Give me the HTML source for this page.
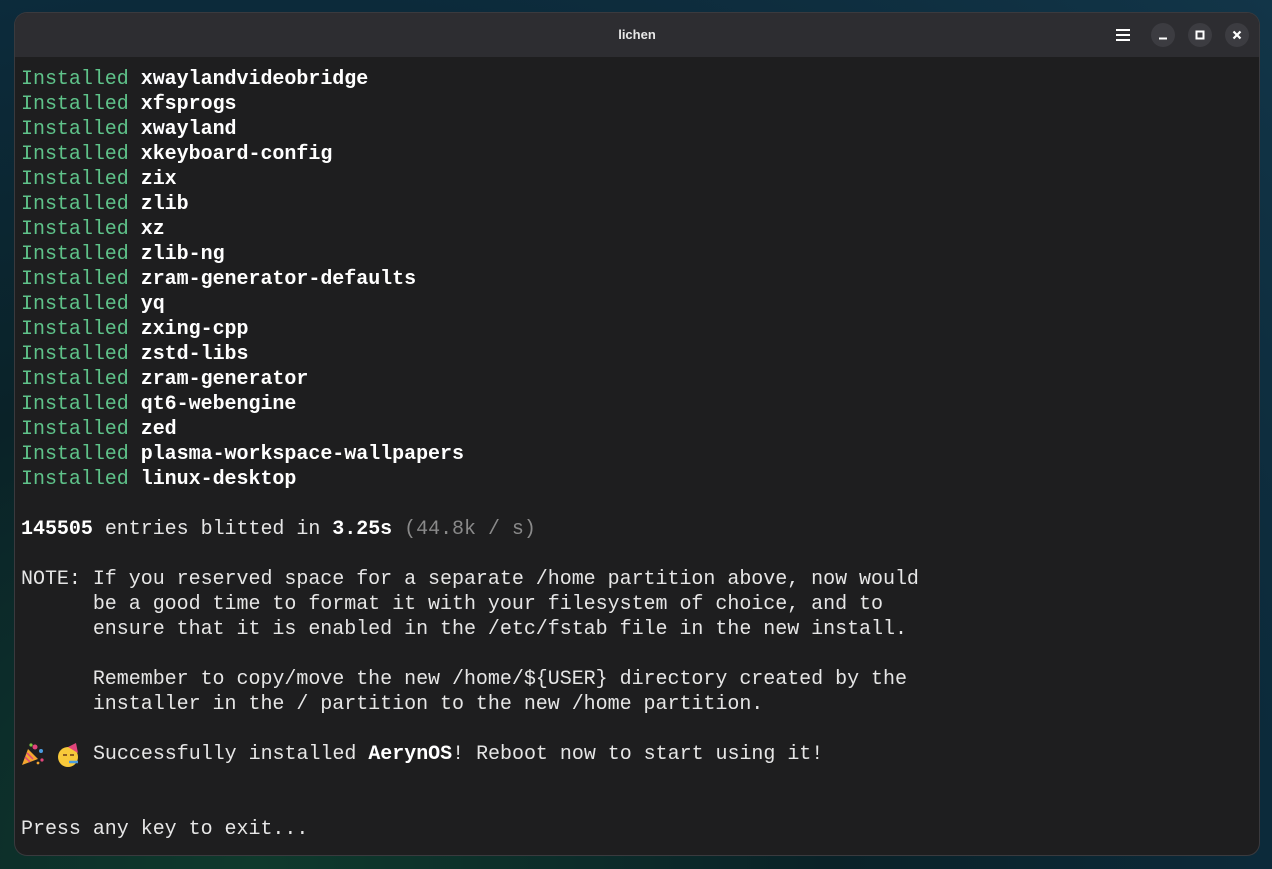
<!DOCTYPE html>
<html><head><meta charset="utf-8"><style>
html,body{margin:0;padding:0;width:1272px;height:869px;overflow:hidden}
body{background:radial-gradient(ellipse at 20% 100%,#0f3a2c 0%,#0a2228 40%,#0c2a3a 70%,#123548 100%);position:relative}
.win{position:absolute;left:15px;top:13px;width:1244px;height:842px;border-radius:12px;background:#1e1e1f;overflow:hidden;box-shadow:0 0 0 1px #3a3a3e}
.tb{height:44px;background:#2d2d31;position:relative}
.title{position:absolute;left:0;right:0;top:0;text-align:center;color:#e8e8e8;font:bold 13px "Liberation Sans",sans-serif;line-height:44px}
.btn{position:absolute;top:10px;width:24px;height:24px;border-radius:50%;background:#3c3c41}
pre{margin:0;position:absolute;left:6px;top:54px;font:20px "Liberation Mono",monospace;line-height:25px;color:#e6e6e6;letter-spacing:-0.03px}
.g{color:#5fc38a}.b{font-weight:bold;color:#fff}.d{color:#8a8a8a}
.e{display:inline-block;width:24px;height:25px;vertical-align:top}
</style></head><body>
<div class="win">
<div class="tb"><div class="title">lichen</div>
<svg style="position:absolute;left:1100px;top:14px" width="16" height="16"><path d="M1 3h14M1 8h14M1 13h14" stroke="#fff" stroke-width="2"/></svg>
<div class="btn" style="left:1136px"><svg width="24" height="24"><path d="M8 15.5h8" stroke="#fff" stroke-width="2"/></svg></div>
<div class="btn" style="left:1173px"><svg width="24" height="24"><rect x="8.5" y="8.5" width="7" height="7" fill="none" stroke="#fff" stroke-width="2"/></svg></div>
<div class="btn" style="left:1210px"><svg width="24" height="24"><path d="M8.5 8.5l7 7M15.5 8.5l-7 7" stroke="#fff" stroke-width="2.2"/></svg></div>
</div>
<pre><span class="g">Installed</span> <span class="b">xwaylandvideobridge</span>
<span class="g">Installed</span> <span class="b">xfsprogs</span>
<span class="g">Installed</span> <span class="b">xwayland</span>
<span class="g">Installed</span> <span class="b">xkeyboard-config</span>
<span class="g">Installed</span> <span class="b">zix</span>
<span class="g">Installed</span> <span class="b">zlib</span>
<span class="g">Installed</span> <span class="b">xz</span>
<span class="g">Installed</span> <span class="b">zlib-ng</span>
<span class="g">Installed</span> <span class="b">zram-generator-defaults</span>
<span class="g">Installed</span> <span class="b">yq</span>
<span class="g">Installed</span> <span class="b">zxing-cpp</span>
<span class="g">Installed</span> <span class="b">zstd-libs</span>
<span class="g">Installed</span> <span class="b">zram-generator</span>
<span class="g">Installed</span> <span class="b">qt6-webengine</span>
<span class="g">Installed</span> <span class="b">zed</span>
<span class="g">Installed</span> <span class="b">plasma-workspace-wallpapers</span>
<span class="g">Installed</span> <span class="b">linux-desktop</span>

<span class="b">145505</span> entries blitted in <span class="b">3.25s</span> <span class="d">(44.8k / s)</span>

NOTE: If you reserved space for a separate /home partition above, now would
      be a good time to format it with your filesystem of choice, and to
      ensure that it is enabled in the /etc/fstab file in the new install.

      Remember to copy/move the new /home/${USER} directory created by the
      installer in the / partition to the new /home partition.

<span class="e"><svg width="24" height="25"><path d="M1 23l6-16 10 10z" fill="#f4a630"/><path d="M4 15l5 5M6 11l6 6" stroke="#e0457b" stroke-width="1.5"/><circle cx="14" cy="5" r="2.5" fill="#e0457b"/><circle cx="20" cy="9" r="2" fill="#4a9be0"/><circle cx="10" cy="3" r="1.6" fill="#7ac943"/><circle cx="21" cy="18" r="1.6" fill="#e0457b"/><circle cx="17" cy="21" r="1.4" fill="#f4a630"/></svg></span> <span class="e"><svg width="24" height="25"><circle cx="11" cy="15" r="10" fill="#f8c93a"/><path d="M11 5l8-4 2 10z" fill="#e0457b"/><path d="M6 13h4M13 13h4" stroke="#6b3b1a" stroke-width="1.6"/><path d="M12 20h9" stroke="#4a9be0" stroke-width="2.5"/></svg></span> Successfully installed <span class="b">AerynOS</span>! Reboot now to start using it!


Press any key to exit...</pre>
</div>
</body></html>
